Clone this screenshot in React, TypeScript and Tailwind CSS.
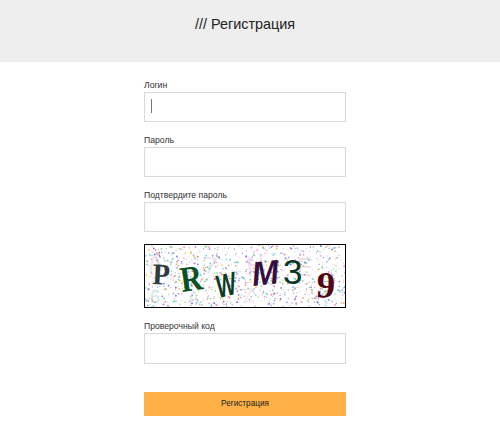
import { useMemo } from "react";

const dotColors = ["#b98ad6", "#86dcb4", "#f09a9a", "#8fbcf0", "#e6cc66", "#9a6cd0", "#5fd8d8", "#c8c8c8", "#f09ad8", "#7a80d0", "#b0b0b0", "#8cc88c"];

const ghostLetters = [
  { c: "A", x: 4, y: 26, s: 22, r: -8, col: "#f4e2ec" },
  { c: "7", x: 58, y: 28, s: 24, r: 8, col: "#ece6f6" },
  { c: "H", x: 102, y: 30, s: 26, r: -6, col: "#f6e0ee" },
  { c: "E", x: 150, y: 30, s: 26, r: 5, col: "#f4e0e0" },
  { c: "6", x: 5, y: 58, s: 18, r: 0, col: "#cfe8e4" },
  { c: "A", x: 42, y: 58, s: 18, r: 5, col: "#dff0e0" },
  { c: "Z", x: 98, y: 58, s: 20, r: -6, col: "#f2e6ee" },
  { c: "K", x: 170, y: 58, s: 20, r: 4, col: "#e6e6f8" },
];

const letters = [
  { c: "P", x: 7, y: 39, s: 30, r: 3, col: "#2e3c3c", fam: "'Liberation Serif', serif", w: 700, sx: 0.95, it: "normal" },
  { c: "R", x: 37, y: 47, s: 36, r: -8, col: "#0a5226", fam: "'Liberation Serif', serif", w: 700, sx: 0.85, it: "normal" },
  { c: "W", x: 74, y: 53, s: 32, r: -14, col: "#0e3a22", fam: "'Liberation Sans', sans-serif", w: 700, sx: 0.66, it: "italic" },
  { c: "M", x: 108, y: 41, s: 34, r: -6, col: "#35103f", fam: "'Liberation Sans', sans-serif", w: 700, sx: 0.95, it: "italic" },
  { c: "3", x: 138, y: 39, s: 35, r: 0, col: "#0a3621", fam: "'Liberation Sans', sans-serif", w: 400, sx: 1, it: "normal" },
  { c: "9", x: 171, y: 52, s: 37, r: 3, col: "#560310", fam: "'Liberation Serif', serif", w: 700, sx: 1, it: "normal" },
];

function Captcha() {
  // fixed seed so the noise stays the same between loads
  const dots = useMemo(() => {
    let seed = 4711;
    const next = () => {
      seed = (seed * 16807) % 2147483647;
      return seed / 2147483647;
    };
    return Array.from({ length: 1000 }, () => ({
      x: next() * 200,
      y: next() * 62,
      r: 0.3 + next() * 0.75,
      col: dotColors[Math.floor(next() * dotColors.length)],
    }));
  }, []);

  return (
    <div className="mt-3 h-16 w-full border border-black bg-white">
      <svg width="200" height="62" viewBox="0 0 200 62" className="block overflow-hidden">
        {ghostLetters.map((g, i) => (
          <text
            key={i}
            x={g.x}
            y={g.y}
            fontSize={g.s}
            fill={g.col}
            fontFamily="'Liberation Sans', sans-serif"
            transform={`rotate(${g.r} ${g.x} ${g.y})`}
          >
            {g.c}
          </text>
        ))}
        {dots.map((d, i) => (
          <circle key={i} cx={d.x} cy={d.y} r={d.r} fill={d.col} />
        ))}
        {letters.map((l, i) => (
          <text
            key={i}
            fontSize={l.s}
            fill={l.col}
            fontFamily={l.fam}
            fontWeight={l.w}
            fontStyle={l.it}
            transform={`translate(${l.x} ${l.y}) rotate(${l.r}) scale(${l.sx} 1)`}
          >
            {l.c}
          </text>
        ))}
      </svg>
    </div>
  );
}

function Field({ label, className, inputClass, focused }: { label: string; className?: string; inputClass: string; focused?: boolean }) {
  return (
    <div className={className}>
      <label className="block text-[8.65px] leading-[12px] text-[#333]">{label}</label>
      <div className={`relative mt-px w-full border border-[#d9d9d9] bg-white shadow-[inset_0_0_1px_#e4e4e4] ${inputClass}`}>
        {focused && <span className="absolute left-[6px] top-[6px] h-[14px] w-px bg-[#777]" />}
      </div>
    </div>
  );
}

export default function App() {
  return (
    <div className="min-h-[442px] bg-white pr-[10px] font-['Liberation_Sans',sans-serif]">
      <header className="-mr-[10px] h-[62px] bg-[#eeeeee] pr-[10px] pt-[15px] text-center text-[14.4px] leading-[18px] text-[#222]">
        /// Регистрация
      </header>
      <main className="mx-auto w-[202px] pt-[17px]">
        <Field label="Логин" inputClass="h-[30px]" focused />
        <Field label="Пароль" className="mt-[12px]" inputClass="h-[30px]" />
        <Field label="Подтвердите пароль" className="mt-[12px]" inputClass="h-[30px]" />
        <Captcha />
        <Field label="Проверочный код" className="mt-[12px]" inputClass="h-[31px]" />
        <button className="mt-[28px] block h-6 w-full bg-[#ffb047] text-[8.2px] text-[#222]">Регистрация</button>
      </main>
    </div>
  );
}
